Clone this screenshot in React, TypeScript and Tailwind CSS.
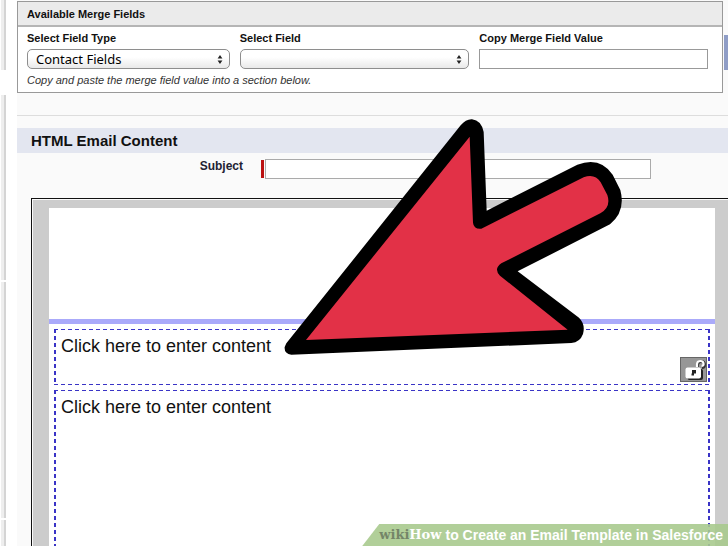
import type { ReactNode } from "react";

const railSections = ["h-[70px]", "mt-[25px] h-[185px]", "mt-[2px] h-[236px]", "mt-[2px] flex-1"];

function SideRail() {
  return (
    <div className="flex w-[17px] shrink-0 flex-col pl-px" aria-hidden>
      {railSections.map((size) => (
        <div key={size} className={`w-[5px] border-r-2 border-[#d4d4d4] bg-[#eeeeee] ${size}`} />
      ))}
    </div>
  );
}

interface SelectBoxProps {
  id: string;
  label: string;
  options: string[];
}

function SelectBox({ id, label, options }: SelectBoxProps) {
  return (
    <div className="flex min-w-0 flex-col gap-1">
      <label htmlFor={id} className="text-[11px] leading-[14px] font-bold">
        {label}
      </label>
      <div className="relative">
        <select
          id={id}
          className="block h-[20px] w-full appearance-none rounded-[5px] border border-[#8e8e8e] bg-linear-to-b from-white from-40% to-[#e9e9e9] pl-2 font-['Noto_Sans','Open_Sans',sans-serif] text-[13px] leading-[18px] text-black"
        >
          {options.map((option) => (
            <option key={option}>{option}</option>
          ))}
        </select>
        <svg
          viewBox="0 0 6 9"
          className="pointer-events-none absolute top-[6px] right-[7px] h-[9px] w-[6px]"
          aria-hidden
        >
          <path d="M3 0 L5.4 3.4 H0.6 Z M3 9 L0.6 5.6 H5.4 Z" fill="#222" />
        </svg>
      </div>
    </div>
  );
}

function MergeFields() {
  return (
    <section className="mt-px mr-[5px] border border-[#999999] bg-white">
      <h2 className="border-b-2 border-[#b5b5b5] bg-[#ebebeb] px-[9px] pt-[5px] pb-1 text-[11px] leading-[14px] font-bold">
        Available Merge Fields
      </h2>
      <div className="px-[9px] py-1">
        <div className="mr-[5px] grid grid-cols-[203fr_230fr_229fr] gap-[10px]">
          <SelectBox id="field-type" label="Select Field Type" options={["Contact Fields"]} />
          <SelectBox id="field" label="Select Field" options={[""]} />
          <div className="flex min-w-0 flex-col gap-1">
            <label htmlFor="field-value" className="text-[11px] leading-[14px] font-bold">
              Copy Merge Field Value
            </label>
            <input
              id="field-value"
              type="text"
              className="h-[20px] w-full border border-[#999999] bg-white px-1 text-[12px]"
            />
          </div>
        </div>
        <p className="mt-1 pb-px text-[11px] leading-[14px] text-[#333333] italic">
          Copy and paste the merge field value into a section below.
        </p>
      </div>
    </section>
  );
}

const dashes =
  "bg-[repeating-linear-gradient(90deg,#3a34c6_0_4px,transparent_4px_7px),repeating-linear-gradient(90deg,#3a34c6_0_4px,transparent_4px_7px),repeating-linear-gradient(180deg,#3a34c6_0_4px,transparent_4px_7px),repeating-linear-gradient(180deg,#3a34c6_0_4px,transparent_4px_7px)] bg-[size:100%_1px,100%_1px,2px_100%,2px_100%] bg-[position:left_top,left_bottom,left_top,right_top] bg-no-repeat";

function EditableBlock({ className, children }: { className: string; children?: ReactNode }) {
  return (
    <div className={`relative px-[7px] pt-[5px] ${dashes} ${className}`}>
      <p className="text-[18px] leading-[24px] text-[#111111]">Click here to enter content</p>
      {children}
    </div>
  );
}

function LockButton() {
  return (
    <button type="button" aria-label="Unlock section" className="absolute right-[3px] bottom-[3px] h-[25px] w-[27px]">
      <svg viewBox="0 0 27 25" className="block h-full w-full" aria-hidden>
        <rect x="0.5" y="0.5" width="26" height="24" fill="#979797" stroke="#666" />
        <path d="M17.5 10 V7.5 Q18 4.5 21 4.5 Q24.5 4.5 24.5 8 Q24.5 10.5 22 10.5" fill="none" stroke="#333" strokeWidth="3" />
        <path d="M17 10 V7 Q17.2 4 20.3 4 Q23.6 4 23.6 7.2 Q23.4 9 21.6 9" fill="none" stroke="#fff" strokeWidth="2.2" />
        <rect x="7.5" y="12" width="15.5" height="11" rx="2" fill="#222" />
        <rect x="5.5" y="10.5" width="15.5" height="11" rx="2" fill="#fff" />
        <path d="M12 13 h4 v3.5 h-2 v2 h-2.5 v-2 h0.5 z" fill="#222" />
      </svg>
    </button>
  );
}

function EmailEditor() {
  return (
    <div className="mt-[19px] ml-[14px] flex min-h-0 flex-1 flex-col border-t border-l border-[#111111] pt-px pl-px">
      <div className="flex flex-1 flex-col bg-[#cccccc] pt-2 pr-[13px] pl-[16px]">
        <div className="flex flex-1 flex-col bg-white">
          <div className="h-[116px] border-b-[5px] border-[#aaaafa]" />
          <div className="-mb-2 flex flex-1 flex-col gap-[5px] px-[5px] pt-[5px]">
            <EditableBlock className="h-[56px]">
              <LockButton />
            </EditableBlock>
            <EditableBlock className="flex-1" />
          </div>
        </div>
      </div>
    </div>
  );
}

function PointerArrow() {
  return (
    <svg
      viewBox="0 0 1140 750"
      className="pointer-events-none absolute top-[110px] left-[270px] h-[250px] w-[380px]"
      aria-hidden
    >
      <path
        d="M49 700 L572 46 Q588 27 606 28 Q634 31 641 66 L650 302 L922 164 Q990 138 1028 194 L1051 240 Q1068 304 1020 343 L743 484 L927 623 Q947 643 939 672 Q930 697 904 699 L64 734 Q42 732 44 711 Z"
        fill="#000"
      />
      <path
        d="M599 80 L609 338 Q611 358 634 356 L941 202 Q974 189 992 217 L1012 255 Q1024 291 991 310 L694 460 Q670 477 690 497 L893 659 L108 690 Z"
        fill="#e23147"
      />
    </svg>
  );
}

function TitleRibbon() {
  return (
    <div className="absolute right-0 bottom-0 flex h-[22px] items-center bg-[#a9ca8e]/90 pr-[5px] pl-[17px] whitespace-nowrap [clip-path:polygon(17px_0,100%_0,100%_100%,0_100%)]">
      <span className="font-['DejaVu_Serif',serif] text-[13px] leading-[22px] font-bold text-[#748568]">wiki</span>
      <span className="font-['DejaVu_Serif',serif] text-[13px] leading-[22px] font-bold text-white">How</span>
      <span className="ml-1 text-[14px] leading-[22px] font-bold text-white">
        to Create an Email Template in Salesforce
      </span>
    </div>
  );
}

export default function App() {
  return (
    <div className="relative flex h-screen overflow-hidden bg-white font-['Liberation_Sans',Arial,sans-serif] text-[#111111]">
      <SideRail />
      <main className="flex min-w-0 flex-1 flex-col bg-[#fafafa]">
        <MergeFields />
        <div className="mt-[22px] border-t border-[#dddddd] pt-[12px]">
          <h1 className="bg-[#e3e6f0] px-[14px] text-[15px] leading-[25px] font-bold">HTML Email Content</h1>
        </div>
        <div className="mt-[6px] flex items-start">
          <label
            htmlFor="subject"
            className="w-[226px] shrink-0 text-right text-[12px] leading-[15px] font-bold text-[#222233]"
          >
            Subject
          </label>
          <div className="mr-[77px] ml-[18px] flex flex-1 items-center gap-px">
            <span className="h-[18px] w-[3px] bg-[#bb1111]" aria-hidden />
            <input
              id="subject"
              type="text"
              required
              className="h-[20px] min-w-0 flex-1 border border-[#aaaaaa] bg-white px-1 text-[12px]"
            />
          </div>
        </div>
        <EmailEditor />
      </main>
      <div className="absolute top-[35px] right-0 h-[35px] w-[4px] bg-[#8f9dc6]" aria-hidden />
      <PointerArrow />
      <TitleRibbon />
    </div>
  );
}
